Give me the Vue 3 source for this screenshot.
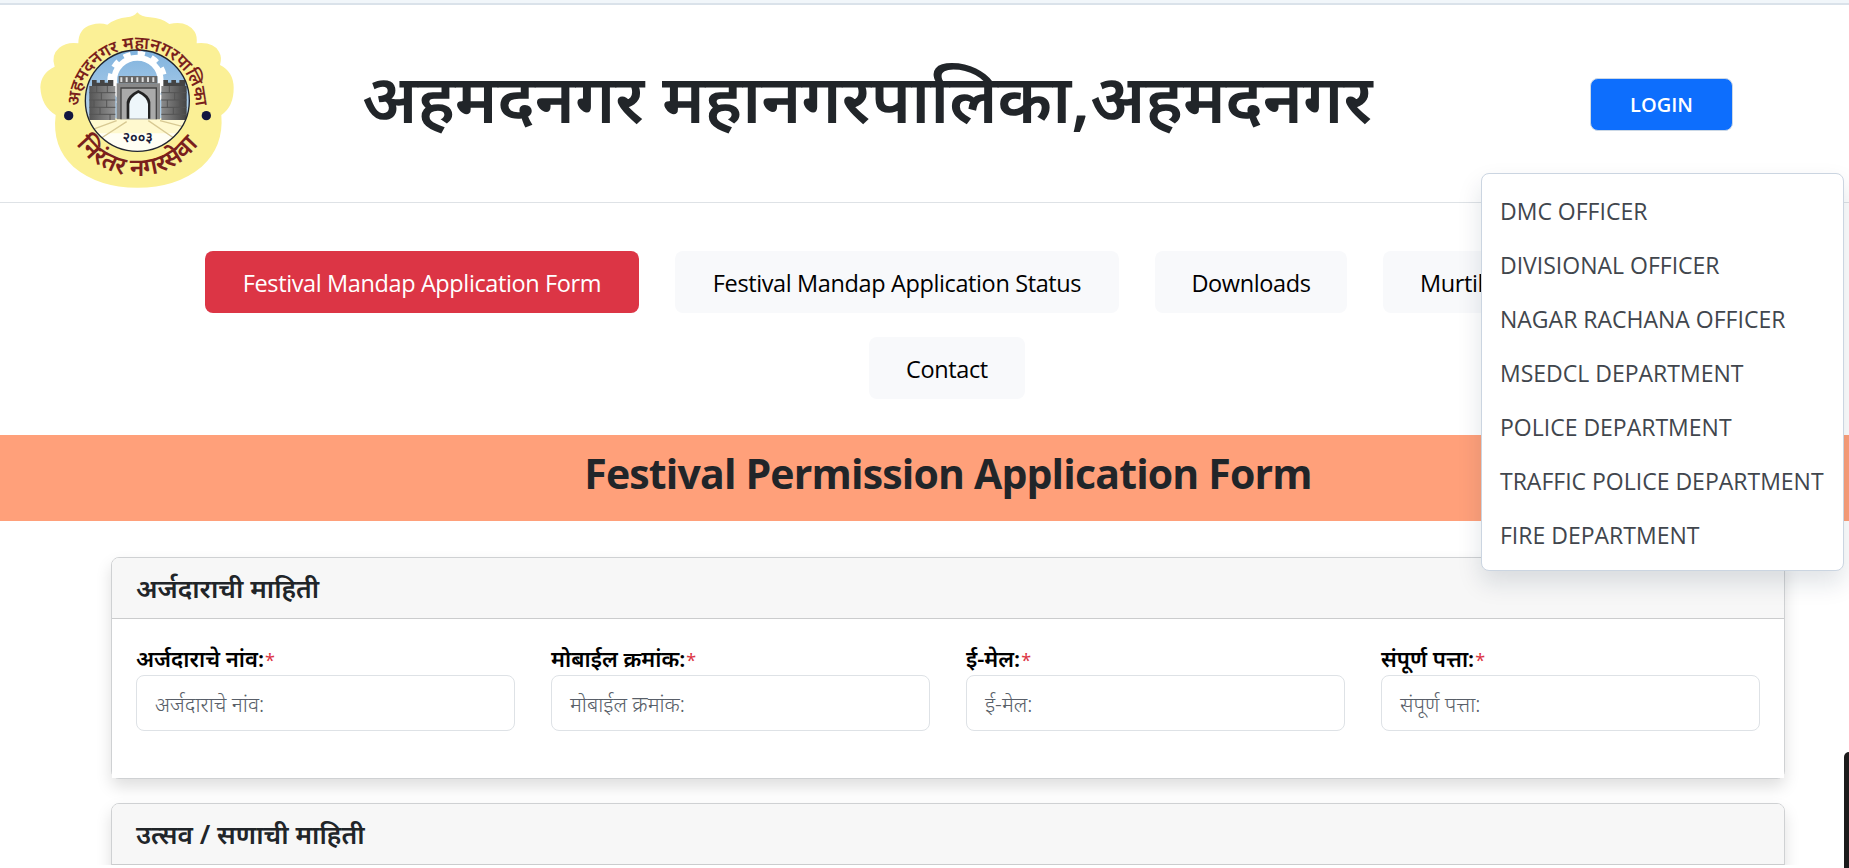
<script setup>
const officers = ['DMC OFFICER', 'DIVISIONAL OFFICER', 'NAGAR RACHANA OFFICER', 'MSEDCL DEPARTMENT', 'POLICE DEPARTMENT', 'TRAFFIC POLICE DEPARTMENT', 'FIRE DEPARTMENT']
const fields = ['अर्जदाराचे नांव:', 'मोबाईल क्रमांक:', 'ई-मेल:', 'संपूर्ण पत्ता:']
</script>

<template>
  <div class="page">
    <div class="topline"></div>
    <header class="header">
      <svg class="logo" viewBox="60 30 585 540" role="img" aria-label="logo">
        <defs>
          <path id="arcTop" d="M178 318A174 172 0 0 1 526 318" />
          <path id="arcBottom" d="M130 306A222 222 0 0 0 574 306" />
          <linearGradient id="sky" x1="0" y1="0" x2="0" y2="1"><stop offset="0" stop-color="#7fb2de" /><stop offset="1" stop-color="#d5e6f2" /></linearGradient>
          <linearGradient id="stone" x1="0" y1="0" x2="1" y2="0"><stop offset="0" stop-color="#555" /><stop offset=".5" stop-color="#ccc" /><stop offset="1" stop-color="#444" /></linearGradient>
          <clipPath id="disc"><ellipse cx="352" cy="302" rx="156" ry="152" /></clipPath>
        </defs>
        <path fill="#fbf096" d="M352 37Q362 50 390 52Q425 54 448 72Q500 60 524 95Q532 108 530 130Q580 125 597 155Q607 172 600 195Q640 215 641 262Q642 320 604 345Q612 440 545 500Q470 563 352 563Q235 563 160 500Q95 440 107 345Q64 320 61 262Q62 220 104 200Q92 165 118 143Q140 125 175 130Q175 85 215 74Q240 67 262 74Q290 54 320 52Q342 50 352 37Z" />
        <ellipse cx="352" cy="302" rx="156" ry="152" fill="url(#sky)" />
        <g clip-path="url(#disc)">
          <circle cx="352" cy="243" r="70" fill="none" stroke="#fff" stroke-width="18" />
          <circle cx="352" cy="243" r="83" fill="none" stroke="#fff" stroke-width="14" stroke-dasharray="22 21.5" />
          <path fill="#fff9cf" d="M190 355H515V410H190Z" />
          <path fill="#fffef4" d="M190 400H515V460H190Z" />
          <path d="M290 362L200 395M320 365L235 420M385 362L470 420M420 362L510 385" stroke="#d8c993" stroke-width="4" />
          <path d="M208 258H286V360H208ZM424 258H500V360H424Z" fill="url(#stone)" />
          <path d="M216 258V240H230V248H240V240H254V248H264V240H280V258ZM430 258V240H444V248H454V240H468V248H478V240H496V258Z" fill="#444" />
          <path d="M208 278H286M208 300H286M208 322H286M208 343H286M230 258V278M262 258V278M244 278V300M222 300V322M260 300V322M240 322V343M270 343V360M424 278H500M424 300H500M424 322H500M424 343H500M448 258V278M480 258V278M464 278V300M442 300V322M480 300V322M460 322V343" stroke="#555" stroke-width="3" />
          <path d="M290 250H420V358H290Z" fill="#888" />
          <path d="M296 228H412V250H296Z" fill="#666" />
          <path d="M304 246V232M320 246V232M336 246V232M352 246V232M368 246V232M384 246V232M400 246V232" stroke="#ddd" stroke-width="6" />
          <path d="M303 358V264H409V358" fill="#aaa" stroke="#444" stroke-width="4" />
          <path d="M320 356V306Q324 285 355 270Q388 285 391 306V356Z" fill="#222" />
          <path d="M328 356V312Q332 290 355 279Q380 290 384 312V356Z" fill="#eef6fa" />
        </g>
        <ellipse cx="352" cy="302" rx="156" ry="152" fill="none" stroke="#20242f" stroke-width="4" />
        <circle cx="146" cy="347" r="14" fill="#11153f" /><circle cx="559" cy="347" r="14" fill="#11153f" />
        <text class="year" x="353" y="427" text-anchor="middle">२००३</text>
        <text class="ring"><textPath href="#arcTop" startOffset="50%" text-anchor="middle">अहमदनगर महानगरपालिका</textPath></text>
        <text class="ring low"><textPath href="#arcBottom" startOffset="50%" text-anchor="middle">निरंतर नगरसेवा</textPath></text>
      </svg>
      <h1 class="title">अहमदनगर महानगरपालिका,अहमदनगर</h1>
      <div class="account">
        <button class="login">LOGIN</button>
        <ul class="menu">
          <li v-for="o in officers" :key="o">{{ o }}</li>
        </ul>
      </div>
    </header>

    <nav class="nav">
      <a class="tab active">Festival Mandap Application Form</a>
      <a class="tab status">Festival Mandap Application Status</a>
      <a class="tab downloads">Downloads</a>
      <a class="tab murtikar">Murtikar</a>
      <a class="tab contact">Contact</a>
    </nav>

    <h2 class="banner">Festival Permission Application Form</h2>

    <main class="content">
      <section class="card">
        <h3 class="card-head">अर्जदाराची माहिती</h3>
        <div class="fields">
          <div v-for="f in fields" :key="f" class="field">
            <label>{{ f }}<i>*</i></label>
            <div class="input">{{ f }}</div>
          </div>
        </div>
      </section>
      <section class="card next">
        <h3 class="card-head">उत्सव / सणाची माहिती</h3>
      </section>
    </main>
    <div class="side-handle"></div>
  </div>
</template>

<style>
body { margin: 0; }
</style>
<style scoped>
.page { position: relative; box-sizing: border-box; width: 100%; height: 868px; overflow: hidden; background: #fff; color: #212529; font-family: "Open Sans", "Noto Sans", sans-serif; font-size: 24px; display: flex; flex-direction: column; }
.topline { flex: none; height: 3px; background: #f1f6fa; border-bottom: 2px solid #dae2ea; }
.header { flex: none; box-sizing: border-box; height: 198px; border-bottom: 1px solid #dee2e6; display: flex; align-items: flex-start; padding-left: 40px; }
.logo { flex: none; width: 195px; height: 180px; margin-top: 5px; }
.ring { fill: #7a1f1c; font: 600 52px "Noto Sans", sans-serif; }
.low { font-size: 74px; }
.year { fill: #191c3a; font: 600 42px "Noto Sans", sans-serif; }
.title { flex: none; width: 1228px; margin: 44px 0 0 127px; font: 600 67.7px/96px "Noto Sans", sans-serif; white-space: nowrap; }
.account { position: relative; }
.login { display: block; box-sizing: border-box; width: 143px; height: 53px; margin-top: 73px; border: 1px solid #cbd8e6; border-radius: 8px; background: #0d6efd; color: #fff; font: 600 20px "Open Sans", sans-serif; padding: 0; }
.menu { position: absolute; z-index: 2; left: -109px; top: 168px; box-sizing: border-box; width: 363px; height: 398px; margin: 0; padding: 10px 18px; list-style: none; border: 1px solid #cbd5e1; border-radius: 8px; background: #fff; box-shadow: 0 12px 24px rgba(18, 38, 63, .13); }
.menu li { height: 54px; line-height: 54px; font-size: 23px; color: #41464d; white-space: nowrap; }
.nav { flex: none; box-sizing: border-box; height: 232px; padding: 48px 160px 0 205px; display: flex; flex-wrap: wrap; align-content: flex-start; justify-content: center; gap: 24px 36px; font-size: 23.5px; letter-spacing: -.38px; }
.tab { box-sizing: border-box; display: flex; align-items: center; justify-content: center; height: 62px; padding-top: 2px; border-radius: 8px; background: #f8f9fb; color: #000; white-space: nowrap; }
.active { width: 434px; background: #dc3545; color: #fff; }
.status { width: 444px; }
.downloads { width: 192px; }
.murtikar { width: 306px; padding-left: 37px; justify-content: flex-start; }
.contact { width: 156px; }
.banner { flex: none; height: 86px; margin: 0; padding-left: 47px; background: #ffa07a; display: flex; justify-content: center; font: 700 41px/77px "Open Sans", sans-serif; letter-spacing: -.83px; }
.content { flex: none; box-sizing: border-box; height: 344px; overflow: hidden; display: flex; flex-direction: column; gap: 24px; padding: 36px 64px 0 111px; }
.card { flex: none; border: 1px solid #cfd1d3; border-radius: 8px; background: #fff; box-shadow: 0 8px 16px rgba(0, 0, 0, .13); }
.next { height: 180px; }
.card-head { box-sizing: border-box; height: 61px; margin: 0; padding-left: 24px; border-bottom: 1px solid #cbcccd; border-radius: 7px 7px 0 0; background: #f7f7f7; font: 600 26.3px/60px "Noto Sans", sans-serif; }
.fields { display: grid; grid-template-columns: repeat(4, 379px); gap: 36px; padding: 24px 24px 47px; background: #fff; }
.field label { display: block; height: 32px; font: 600 22.1px/30px "Noto Sans", sans-serif; color: #000; white-space: nowrap; }
.field i { margin-left: 1px; font-style: normal; font-weight: 400; font-size: 18px; color: #dc3545; }
.input { box-sizing: border-box; height: 56px; border: 1px solid #dee2e6; border-radius: 8px; padding-left: 18px; font: 300 21px/57px "Noto Sans", sans-serif; color: #595f69; }
.side-handle { position: absolute; right: 0; bottom: 0; width: 5px; height: 116px; border-radius: 5px 0 0 0; background: #1b1b1b; }
</style>
